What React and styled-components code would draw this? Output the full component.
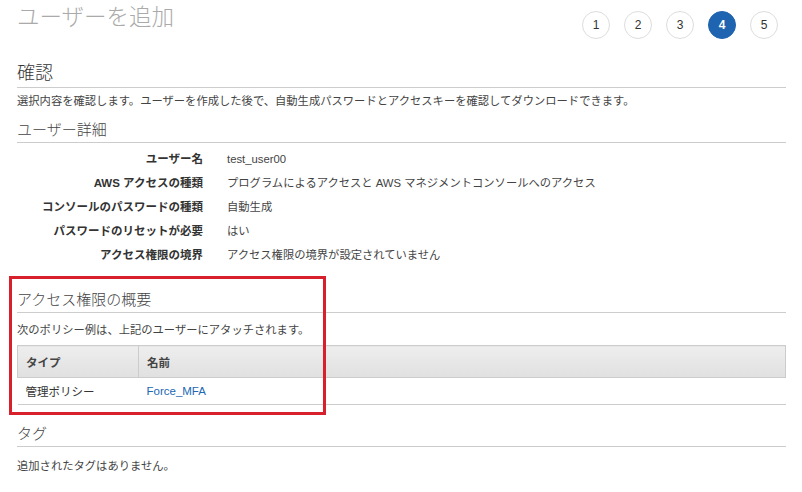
import React from 'react';
import styled, { createGlobalStyle } from 'styled-components';

const GlobalStyle = createGlobalStyle`
  body {
    margin: 0;
    background: #fff;
    font-family: "Liberation Sans", "Noto Sans CJK JP", sans-serif;
    color: #333;
  }
`;

const Page = styled.div`
  padding: 0 16px 0 17px;
`;

const TopBar = styled.div`
  display: flex;
  justify-content: space-between;
  align-items: flex-start;
  height: 50px;
`;

const PageTitle = styled.h1`
  margin: 0;
  padding-top: 5px;
  font-size: 22.5px;
  line-height: 26px;
  font-weight: 300;
  color: #aaa;
`;

const Steps = styled.div`
  display: flex;
  gap: 14px;
  margin-top: 11px;
  margin-right: 8px;
`;

const Step = styled.div`
  width: 28px;
  height: 28px;
  box-sizing: border-box;
  border-radius: 50%;
  display: flex;
  align-items: center;
  justify-content: center;
  font-size: 12px;
  border: 1px solid ${p => (p.$active ? '#1f64b0' : '#ddd')};
  background: ${p => (p.$active ? '#1f64b0' : '#fff')};
  color: ${p => (p.$active ? '#fff' : '#333')};
  font-weight: ${p => (p.$active ? 'bold' : 'normal')};
`;

const MainTitle = styled.h2`
  margin: 12px 0 0;
  padding-bottom: 3px;
  font-size: 18px;
  line-height: 22px;
  font-weight: 300;
  color: #333;
  border-bottom: 1px solid #ccc;
`;

const SubTitle = styled.h3`
  margin: ${p => p.$mt || 0}px 0 0;
  padding-bottom: 2px;
  font-size: 15px;
  line-height: 20px;
  font-weight: 300;
  color: #444;
  border-bottom: 1px solid #ccc;
`;

const Desc = styled.p`
  margin: ${p => p.$mt || 0}px 0 0;
  font-size: 11.3px;
  line-height: 16px;
  color: #444;
`;

const DetailList = styled.div`
  display: grid;
  grid-template-columns: 186px 1fr;
  column-gap: 24px;
  margin-top: 4px;
`;

const Label = styled.div`
  text-align: right;
  font-weight: bold;
  font-size: 11.5px;
  line-height: 24px;
  color: #333;
`;

const Value = styled.div`
  font-size: 11.3px;
  line-height: 24px;
  color: #444;
`;

const AccessSection = styled.section`
  position: relative;
  padding-top: 23px;
`;

const Highlight = styled.div`
  position: absolute;
  left: -8px;
  top: 9px;
  width: 317px;
  height: 139px;
  box-sizing: border-box;
  border: 3px solid #d7202b;
  pointer-events: none;
`;

const Table = styled.table`
  width: 100%;
  margin-top: 7px;
  border-collapse: collapse;
  font-size: 11.5px;
`;

const HeadCell = styled.th`
  height: 31px;
  padding: 0 8px;
  text-align: left;
  font-weight: bold;
  color: #444;
  background: linear-gradient(#eee, #e0e0e0);
  border: 1px solid #ccc;
  width: ${p => p.$w || 'auto'};
`;

const Cell = styled.td`
  height: 26px;
  padding: 0 8px;
  color: #333;
  border-bottom: 1px solid #ccc;
`;

const Link = styled.a`
  color: #2168b2;
  text-decoration: none;
`;

const details = [
  ['ユーザー名', 'test_user00'],
  ['AWS アクセスの種類', 'プログラムによるアクセスと AWS マネジメントコンソールへのアクセス'],
  ['コンソールのパスワードの種類', '自動生成'],
  ['パスワードのリセットが必要', 'はい'],
  ['アクセス権限の境界', 'アクセス権限の境界が設定されていません'],
];

export default function App() {
  return (
    <Page>
      <GlobalStyle />
      <TopBar>
        <PageTitle>ユーザーを追加</PageTitle>
        <Steps>
          {[1, 2, 3, 4, 5].map(n => (
            <Step key={n} $active={n === 4}>{n}</Step>
          ))}
        </Steps>
      </TopBar>

      <MainTitle>確認</MainTitle>
      <Desc $mt={5}>
        選択内容を確認します。ユーザーを作成した後で、自動生成パスワードとアクセスキーを確認してダウンロードできます。
      </Desc>

      <SubTitle $mt={11}>ユーザー詳細</SubTitle>
      <DetailList>
        {details.map(([k, v]) => (
          <React.Fragment key={k}>
            <Label>{k}</Label>
            <Value>{v}</Value>
          </React.Fragment>
        ))}
      </DetailList>

      <AccessSection>
        <SubTitle>アクセス権限の概要</SubTitle>
        <Desc $mt={9}>次のポリシー例は、上記のユーザーにアタッチされます。</Desc>
        <Table>
          <thead>
            <tr>
              <HeadCell $w="104px">タイプ</HeadCell>
              <HeadCell>名前</HeadCell>
            </tr>
          </thead>
          <tbody>
            <tr>
              <Cell>管理ポリシー</Cell>
              <Cell><Link href="#">Force_MFA</Link></Cell>
            </tr>
          </tbody>
        </Table>
        <Highlight />
      </AccessSection>

      <SubTitle $mt={19}>タグ</SubTitle>
      <Desc $mt={11}>追加されたタグはありません。</Desc>
    </Page>
  );
}
